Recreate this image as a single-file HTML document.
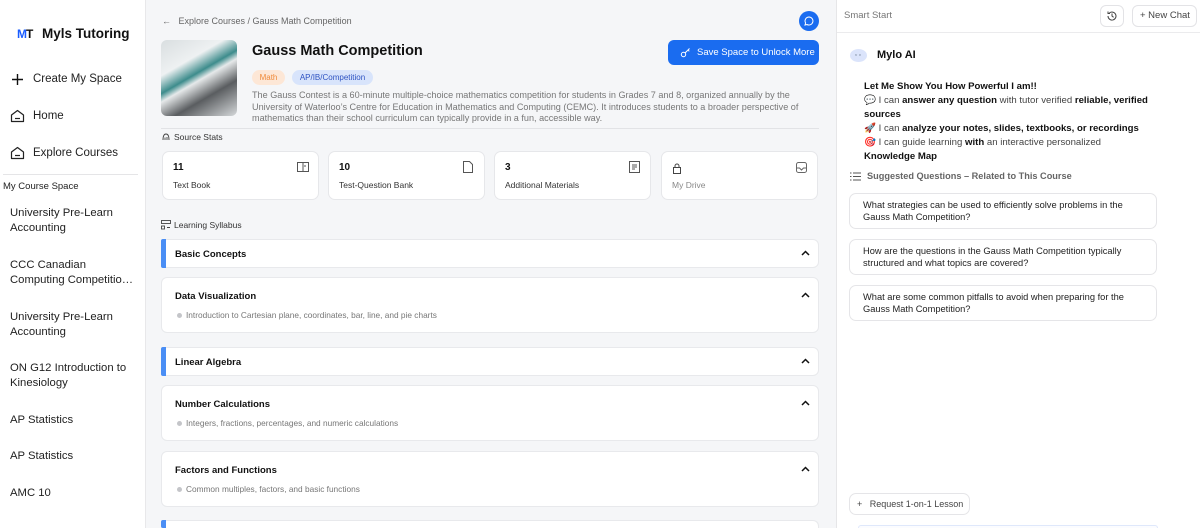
<!DOCTYPE html>
<html style="width:1200px;height:528px;overflow:hidden"><head><meta charset="utf-8">
<style>
*{box-sizing:border-box;margin:0;padding:0}
html,body{overflow:hidden}
body{width:1200px;height:528px;overflow:hidden;font-family:"Liberation Sans","Noto Sans CJK SC",sans-serif;background:#fff;position:relative;color:#111}
.a{position:absolute}
.side{left:0;top:0;width:146px;height:528px;background:#fff;border-right:1px solid #e8e8ea}
.nav{font-size:11.5px;color:#222}
.course{left:10px;font-size:11.3px;line-height:15px;color:#222}
.main{left:146px;top:0;width:690px;height:528px;background:#f5f6f8}
.card{background:#fff;border:1px solid #e6e7ea;border-radius:7px}
.sec{background:#fff;border:1px solid #e8e9ec;border-radius:6px;left:161px;width:658px}
.sec b{position:absolute;left:13px;font-size:9.5px;color:#111}
.bar{position:absolute;left:-1px;top:-1px;bottom:-1px;width:5px;background:#4a8ef5;border-radius:2px 0 0 2px}
.chev{position:absolute;right:8px;width:9px;height:9px}
.sub{position:absolute;left:24px;font-size:8.3px;color:#777}
.sub:before{content:"";position:absolute;left:-9px;top:3px;width:5px;height:5px;border-radius:50%;background:#c4c5c9}
.right{left:836px;top:0;width:364px;height:528px;background:#fff;border-left:1px solid #e6e6e8}
.q{left:849px;width:308px;height:36px;border:1px solid #e5e5e8;border-radius:7px;font-size:9.3px;line-height:12px;padding:5px 13px;color:#222;background:#fff}
.stat{font-size:8.5px;color:#333}
</style></head><body>

<div class="a side">
  <div class="a" style="left:17px;top:27px;font-size:12px;font-weight:bold;letter-spacing:-1px;color:#111"><span style="color:#1a5cff">M</span>T</div>
  <div class="a" style="left:42px;top:26px;font-size:13.5px;font-weight:bold;color:#111">Myls Tutoring</div>
  <svg class="a" style="left:11px;top:73px" width="13" height="13" viewBox="0 0 13 13"><path d="M6.5 1v11M1 6.5h11" stroke="#111" stroke-width="1.4"/></svg>
  <div class="a nav" style="left:33px;top:73px">Create My Space</div>
  <svg class="a" style="left:10px;top:109px" width="15" height="14" viewBox="0 0 15 14"><path d="M1.5 12.5V6L7.5 1.5 13.5 6v6.5z" fill="none" stroke="#222" stroke-width="1.2" stroke-linejoin="round"/><path d="M5 9.5h5" stroke="#222" stroke-width="1.2"/></svg>
  <div class="a nav" style="left:33px;top:110px">Home</div>
  <svg class="a" style="left:10px;top:146px" width="15" height="14" viewBox="0 0 15 14"><path d="M1.5 12.5V6L7.5 1.5 13.5 6v6.5z" fill="none" stroke="#222" stroke-width="1.2" stroke-linejoin="round"/><path d="M5 9.5h5" stroke="#222" stroke-width="1.2"/></svg>
  <div class="a nav" style="left:33px;top:147px">Explore Courses</div>
  <div class="a" style="left:3px;top:174px;width:135px;height:1px;background:#e5e5e7"></div>
  <div class="a" style="left:3px;top:181px;font-size:9.5px;color:#222">My Course Space</div>
  <div class="a course" style="top:206px">University Pre-Learn<br>Accounting</div>
  <div class="a course" style="top:258px;width:125px;white-space:nowrap;overflow:hidden;text-overflow:ellipsis">CCC Canadian<br>Computing Competition...</div>
  <div class="a course" style="top:310px">University Pre-Learn<br>Accounting</div>
  <div class="a course" style="top:361px">ON G12 Introduction to<br>Kinesiology</div>
  <div class="a course" style="top:413px">AP Statistics</div>
  <div class="a course" style="top:449px">AP Statistics</div>
  <div class="a course" style="top:486px">AMC 10</div>
</div>

<div class="a main"></div>
<div class="a" style="left:162px;top:16px;font-size:9px;color:#666">←&nbsp;&nbsp; Explore Courses / Gauss Math Competition</div>
<div class="a" style="left:799px;top:11px;width:20px;height:20px;border-radius:50%;background:#1a6cf0"></div>
<svg class="a" style="left:804px;top:16px" width="10" height="10" viewBox="0 0 10 10"><path d="M5 1a4 4 0 1 1-2 7.5L1 9l.6-2A4 4 0 0 1 5 1z" fill="none" stroke="#fff" stroke-width="1"/></svg>
<div class="a" style="left:161px;top:40px;width:76px;height:76px;border-radius:6px;background:linear-gradient(150deg,#d9dee0 0%,#eef1f2 30%,#3d8c8c 45%,#e6e9ea 52%,#5a5d60 70%,#d5d8da 100%)"></div>
<div class="a" style="left:252px;top:43px;font-size:14.5px;font-weight:bold;color:#111">Gauss Math Competition</div>
<div class="a" style="left:668px;top:40px;width:151px;height:25px;background:#1a6cf0;border-radius:6px;color:#fff;font-size:9.5px;line-height:25px;padding-left:29px">Save Space to Unlock More</div>
<svg class="a" style="left:680px;top:47px" width="11" height="11" viewBox="0 0 11 11"><circle cx="3.5" cy="7.5" r="2.2" fill="none" stroke="#fff" stroke-width="1"/><path d="M5 6l4.5-4.5M8 3l1.3 1.3" stroke="#fff" stroke-width="1"/></svg>
<div class="a" style="left:252px;top:70px;width:33px;height:15px;border-radius:8px;background:#fde7d6;color:#ef8a3a;font-size:8px;line-height:15px;text-align:center">Math</div>
<div class="a" style="left:292px;top:70px;width:81px;height:15px;border-radius:8px;background:#d8e4fb;color:#2e53c2;font-size:8px;line-height:15px;text-align:center">AP/IB/Competition</div>
<div class="a" style="left:252px;top:90px;width:570px;font-size:9.1px;line-height:11.7px;color:#777">The Gauss Contest is a 60-minute multiple-choice mathematics competition for students in Grades 7 and 8, organized annually by the University of Waterloo’s Centre for Education in Mathematics and Computing (CEMC). It introduces students to a broader perspective of mathematics than their school curriculum can typically provide in a fun, accessible way.</div>
<div class="a" style="left:161px;top:128px;width:658px;height:1px;background:#e2e3e6"></div>
<svg class="a" style="left:161px;top:132px" width="10" height="10" viewBox="0 0 10 10"><path d="M2 8c0-4 1-6 3-6s3 2 3 6M4 8V5.5M6 8V5" fill="none" stroke="#444" stroke-width=".9"/></svg>
<div class="a stat" style="left:174px;top:132px">Source Stats</div>

<div class="a card" style="left:162px;top:151px;width:157px;height:49px"></div>
<div class="a card" style="left:328px;top:151px;width:157px;height:49px"></div>
<div class="a card" style="left:494px;top:151px;width:157px;height:49px"></div>
<div class="a card" style="left:661px;top:151px;width:157px;height:49px"></div>
<div class="a" style="left:173px;top:162px;font-size:10px;font-weight:bold">11</div>
<div class="a stat" style="left:173px;top:180px">Text Book</div>
<div class="a" style="left:339px;top:162px;font-size:10px;font-weight:bold">10</div>
<div class="a stat" style="left:339px;top:180px">Test-Question Bank</div>
<div class="a" style="left:505px;top:162px;font-size:10px;font-weight:bold">3</div>
<div class="a stat" style="left:505px;top:180px">Additional Materials</div>
<div class="a stat" style="left:672px;top:180px;color:#888">My Drive</div>
<svg class="a" style="left:297px;top:162px" width="12" height="10" viewBox="0 0 12 10"><rect x=".5" y=".5" width="11" height="9" fill="none" stroke="#555"/><path d="M6 .5v9M8 3v2" stroke="#555"/></svg>
<svg class="a" style="left:463px;top:161px" width="10" height="12" viewBox="0 0 10 12"><path d="M.5.5h6l3 3v8h-9z" fill="none" stroke="#555"/></svg>
<svg class="a" style="left:629px;top:161px" width="11" height="12" viewBox="0 0 11 12"><rect x=".5" y=".5" width="10" height="11" fill="none" stroke="#555"/><path d="M3 4h5M3 6h5M3 8h3" stroke="#555"/></svg>
<svg class="a" style="left:672px;top:163px" width="10" height="11" viewBox="0 0 10 11"><rect x="1.5" y="4.5" width="7" height="6" fill="none" stroke="#444"/><path d="M3 4.5V3a2 2 0 0 1 4 0v1.5" fill="none" stroke="#444"/></svg>
<svg class="a" style="left:796px;top:162px" width="11" height="11" viewBox="0 0 11 11"><rect x=".5" y=".5" width="10" height="10" rx="2" fill="none" stroke="#666"/><path d="M.5 6h3l2 2 2-2h3" fill="none" stroke="#666"/></svg>

<svg class="a" style="left:161px;top:220px" width="10" height="10" viewBox="0 0 10 10"><rect x=".5" y=".5" width="9" height="3" fill="none" stroke="#444" stroke-width=".9"/><rect x=".5" y="6" width="3" height="3" fill="none" stroke="#444" stroke-width=".9"/><path d="M6 7.5h3" stroke="#444"/></svg>
<div class="a stat" style="left:174px;top:220px">Learning Syllabus</div>

<div class="a sec" style="top:239px;height:29px"><div class="bar"></div><b style="top:9px">Basic Concepts</b><svg class="chev" style="top:9px" viewBox="0 0 9 9"><path d="M1 6l3.5-3.5L8 6" fill="none" stroke="#111" stroke-width="1.5"/></svg></div>
<div class="a sec" style="top:277px;height:56px"><b style="top:13px">Data Visualization</b><svg class="chev" style="top:13px" viewBox="0 0 9 9"><path d="M1 6l3.5-3.5L8 6" fill="none" stroke="#111" stroke-width="1.5"/></svg><div class="sub" style="top:32px">Introduction to Cartesian plane, coordinates, bar, line, and pie charts</div></div>
<div class="a sec" style="top:347px;height:29px"><div class="bar"></div><b style="top:9px">Linear Algebra</b><svg class="chev" style="top:9px" viewBox="0 0 9 9"><path d="M1 6l3.5-3.5L8 6" fill="none" stroke="#111" stroke-width="1.5"/></svg></div>
<div class="a sec" style="top:385px;height:56px"><b style="top:13px">Number Calculations</b><svg class="chev" style="top:13px" viewBox="0 0 9 9"><path d="M1 6l3.5-3.5L8 6" fill="none" stroke="#111" stroke-width="1.5"/></svg><div class="sub" style="top:32px">Integers, fractions, percentages, and numeric calculations</div></div>
<div class="a sec" style="top:451px;height:56px"><b style="top:13px">Factors and Functions</b><svg class="chev" style="top:13px" viewBox="0 0 9 9"><path d="M1 6l3.5-3.5L8 6" fill="none" stroke="#111" stroke-width="1.5"/></svg><div class="sub" style="top:32px">Common multiples, factors, and basic functions</div></div>
<div class="a sec" style="top:520px;height:8px;border-bottom:none;border-radius:6px 6px 0 0"><div class="bar" style="bottom:0"></div></div>

<div class="a right"></div>
<div class="a" style="left:837px;top:32px;width:363px;height:1px;background:#ebebed"></div>
<div class="a" style="left:844px;top:10px;font-size:9.5px;color:#777">Smart Start</div>
<div class="a" style="left:1100px;top:5px;width:24px;height:22px;border:1px solid #e3e3e6;border-radius:6px"></div>
<svg class="a" style="left:1106px;top:10px" width="12" height="12" viewBox="0 0 12 12"><path d="M2 6a4 4 0 1 0 1.2-2.8M2 1.5v2h2M6 3.5V6l1.6 1.3" fill="none" stroke="#444" stroke-width="1"/></svg>
<div class="a" style="left:1132px;top:5px;width:65px;height:22px;border:1px solid #e3e3e6;border-radius:6px;font-size:9.5px;line-height:20px;color:#444;padding-left:7px">+ New Chat</div>
<div class="a" style="left:850px;top:49px;width:17px;height:13px;border-radius:50%;background:#dbe4fb"></div>
<div class="a" style="left:855px;top:53px;font-size:6px;color:#456">ᵕ ᵕ</div>
<div class="a" style="left:877px;top:49px;font-size:11px;font-weight:bold;color:#111">Mylo AI</div>
<div class="a" style="left:864px;top:80px;width:285px;font-size:9.6px;line-height:13.9px;color:#444">
<b style="color:#111">Let Me Show You How Powerful I am!!</b><br>
💬 I can <b style="color:#111">answer any question</b> with tutor verified <b style="color:#111">reliable, verified sources</b><br>
🚀 I can <b style="color:#111">analyze your notes, slides, textbooks, or recordings</b><br>
🎯 I can guide learning <b style="color:#111">with</b> an interactive personalized <b style="color:#111">Knowledge Map</b></div>
<svg class="a" style="left:850px;top:172px" width="11" height="9" viewBox="0 0 11 9"><path d="M0 1h1.5M3 1h8M0 4.5h1.5M3 4.5h8M0 8h1.5M3 8h8" stroke="#555" stroke-width=".9"/></svg>
<div class="a" style="left:867px;top:171px;font-size:9.2px;font-weight:bold;color:#666">Suggested Questions – Related to This Course</div>
<div class="a q" style="top:193px">What strategies can be used to efficiently solve problems in the Gauss Math Competition?</div>
<div class="a q" style="top:239px">How are the questions in the Gauss Math Competition typically structured and what topics are covered?</div>
<div class="a q" style="top:285px">What are some common pitfalls to avoid when preparing for the Gauss Math Competition?</div>
<div class="a" style="left:849px;top:493px;width:121px;height:22px;border:1px solid #e5e5e8;border-radius:7px;font-size:9px;line-height:20px;color:#444;padding-left:7px">+&nbsp;&nbsp; Request 1-on-1 Lesson</div>
<div class="a" style="left:858px;top:525px;width:300px;height:3px;border:1px solid #dfe8fb;border-bottom:none;border-radius:6px 6px 0 0;background:#fbfcff"></div>
</body></html>
